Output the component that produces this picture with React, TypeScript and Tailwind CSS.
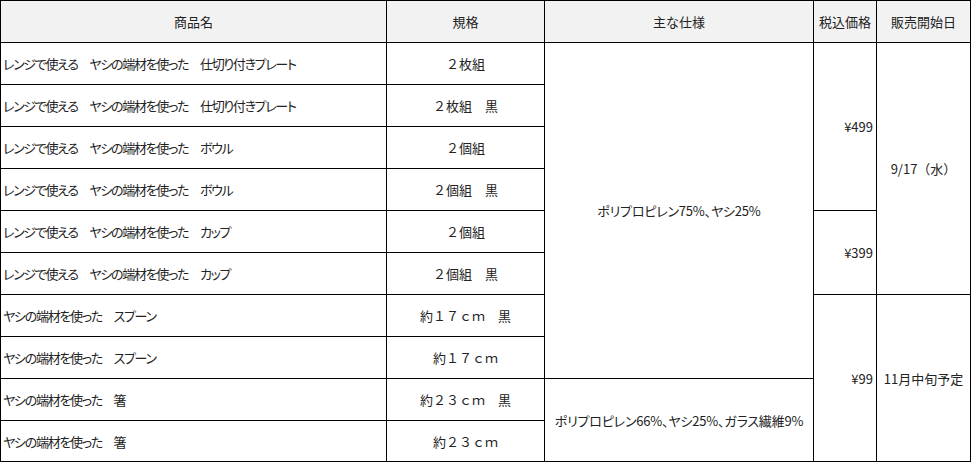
import React from "react";

const font = "font-['Noto_Sans_CJK_JP','Noto_Sans',sans-serif]";
const palt = "[font-feature-settings:'palt']";

const rows: { name: string; spec: string }[] = [
  { name: "レンジで使える　ヤシの端材を使った　仕切り付きプレート", spec: "２枚組" },
  { name: "レンジで使える　ヤシの端材を使った　仕切り付きプレート", spec: "２枚組　黒" },
  { name: "レンジで使える　ヤシの端材を使った　ボウル", spec: "２個組" },
  { name: "レンジで使える　ヤシの端材を使った　ボウル", spec: "２個組　黒" },
  { name: "レンジで使える　ヤシの端材を使った　カップ", spec: "２個組" },
  { name: "レンジで使える　ヤシの端材を使った　カップ", spec: "２個組　黒" },
  { name: "ヤシの端材を使った　スプーン", spec: "約１７ｃｍ　黒" },
  { name: "ヤシの端材を使った　スプーン", spec: "約１７ｃｍ" },
  { name: "ヤシの端材を使った　箸", spec: "約２３ｃｍ　黒" },
  { name: "ヤシの端材を使った　箸", spec: "約２３ｃｍ" },
];

const rowStarts = [
  "row-start-2",
  "row-start-3",
  "row-start-4",
  "row-start-5",
  "row-start-6",
  "row-start-7",
  "row-start-8",
  "row-start-9",
  "row-start-10",
  "row-start-11",
];

const cell = "border-r border-b border-black flex items-center whitespace-nowrap";
const head = `${cell} row-start-1 bg-[#f2f2f2] justify-center`;

export default function App() {
  return (
    <div className={`w-[972px] h-[462px] bg-white text-[13px] leading-none text-[#222] ${font}`}>
      <div className="grid w-[971px] grid-cols-[386px_158px_269px_63px_94px] grid-rows-[42px_repeat(9,42px)_41px] border-l border-t border-black">
        <div className={`${head} col-start-1`}>商品名</div>
        <div className={`${head} col-start-2`}>規格</div>
        <div className={`${head} col-start-3`}>主な仕様</div>
        <div className={`${head} col-start-4`}>税込価格</div>
        <div className={`${head} col-start-5`}>販売開始日</div>

        {rows.map((r, i) => (
          <React.Fragment key={i}>
            <div className={`${cell} col-start-1 ${rowStarts[i]} justify-start pl-[2px] tracking-[-1.3px] ${palt}`}>
              {r.name}
            </div>
            <div className={`${cell} col-start-2 ${rowStarts[i]} justify-center`}>{r.spec}</div>
          </React.Fragment>
        ))}

        <div className={`${cell} col-start-3 row-start-2 row-span-8 justify-center ${palt} tracking-[-0.2px]`}>
          ポリプロピレン75%、ヤシ25%
        </div>
        <div className={`${cell} col-start-3 row-start-10 row-span-2 justify-center ${palt} tracking-[-0.2px]`}>
          ポリプロピレン66%、ヤシ25%、ガラス繊維9%
        </div>

        <div className={`${cell} col-start-4 row-start-2 row-span-4 justify-end pr-[3px]`}>¥499</div>
        <div className={`${cell} col-start-4 row-start-6 row-span-2 justify-end pr-[3px]`}>¥399</div>
        <div className={`${cell} col-start-4 row-start-8 row-span-4 justify-end pr-[3px]`}>¥99</div>

        <div className={`${cell} col-start-5 row-start-2 row-span-6 justify-center`}>9/17（水）</div>
        <div className={`${cell} col-start-5 row-start-8 row-span-4 justify-center`}>11月中旬予定</div>
      </div>
    </div>
  );
}
